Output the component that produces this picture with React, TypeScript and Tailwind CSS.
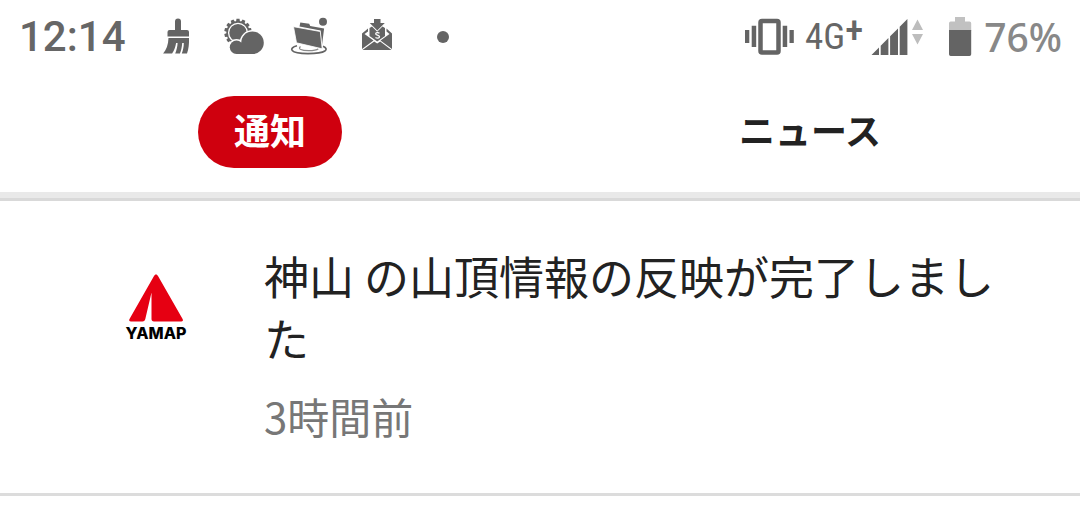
import React from "react";

const teeth = Array.from({ length: 14 }, (_, i) => (i * 360) / 14);

function BrushIcon() {
  return (
    <svg viewBox="164 18 28 38" className="h-[38px] w-7 fill-[#646464]" aria-hidden="true">
      <path d="M176 30V21.500a3 3 0 0 1 6 0V30h6a2 2 0 0 1 2 2v4.500h-21.500V32a2 2 0 0 1 2-2z" />
      <path d="M169.500 38H190c.2 6-.3 11-2 15.500h-5.200c1.300-3.500 2-7 2-10.500h-1.600c-.3 4-1 7.500-2.300 10.500h-4.700c1.400-3.500 2.200-7 2.400-10.500h-1.500c-.7 4-2 7.500-4 10.500h-9c3.200-3.500 5.200-9 5.400-15.500z" />
    </svg>
  );
}

function WeatherIcon() {
  return (
    <svg viewBox="224 17 42 38" className="h-[38px] w-[42px] fill-[#646464]" aria-hidden="true">
      <circle cx="239" cy="31.500" r="11.600" />
      {teeth.map((a) => (
        <path key={a} d="M237 21l.5-3.200h3L241 21z" transform={`rotate(${a} 239 31.500)`} />
      ))}
      <circle cx="239" cy="31.800" r="9.400" fill="none" stroke="#fff" strokeWidth="1.300" />
      <g stroke="#fff" strokeWidth="3">
        <circle cx="237.500" cy="46.300" r="6.700" />
        <circle cx="253.500" cy="41.700" r="11.300" />
      </g>
      <circle cx="237.500" cy="46.300" r="6.700" />
      <circle cx="253.500" cy="41.700" r="11.300" />
      <path d="M237.500 42h16v11h-16z" />
    </svg>
  );
}

function FolderIcon() {
  return (
    <svg viewBox="290 18 40 40" className="h-10 w-10 fill-[#646464]" aria-hidden="true">
      <path
        d="M298 46.800c-8.500 2.200-8 7.700 11 7.800 18.500-.1 21.500-4.300 15-7.300"
        fill="none"
        stroke="#646464"
        strokeWidth="1.700"
      />
      <path d="M301.500 47.500c-3 2.500 1 4.200 8 4.200 5 0 8.500-.7 9.800-1.900" fill="none" stroke="#8a8a8a" strokeWidth="1.200" />
      <path d="M300.500 27.500l.8-4 8.900 1.200 1 2.300 13.900 2.500-2.200 17.500-1.300-15.500z" />
      <path d="M294.500 27.700l26.800 4.800 1.900 17.300-25.700-6z" stroke="#fff" strokeWidth="0.800" />
      <circle cx="324" cy="22.700" r="4" />
    </svg>
  );
}

function MailIcon() {
  return (
    <svg viewBox="361 17 32 34" className="h-[34px] w-8 fill-[#646464]" aria-hidden="true">
      <path d="M374 18h6.500v4h4.300l-7.500 7.500-7.500-7.500h4.200z" />
      <path d="M369.500 27l2.500-1.500 5.200 5.300 5.300-5.300 2.500 1.500v8l-7.800 5.500-7.700-5.500z" />
      <path
        d="M379.500 32.200c-1.500-1-4-.5-3.800.8.200 1.500 3.800 1 3.800 2.800 0 1.400-2.400 1.700-4 .7"
        fill="none"
        stroke="#fff"
        strokeWidth="1.300"
      />
      <path d="M368 27.500l-6 5V48l11.500-8.600-9-6.400 3.500-2.500zM386.500 27.500l5.500 5V48l-11.500-8.600 9-6.400-3-2.500z" />
      <path d="M362.500 49l11.700-8.600 3 2 3-2L391.500 49z" />
    </svg>
  );
}

function VibrateIcon() {
  return (
    <svg viewBox="744 18 50 38" className="h-[38px] w-[50px] fill-[#646464]" aria-hidden="true">
      <rect x="759.500" y="21" width="18" height="31.500" rx="1.500" fill="none" stroke="#646464" strokeWidth="4.500" />
      <path d="M744 30h4.300v13H744zM750.700 25.700h4.500V47h-4.500zM781.700 25.700h4.500V47h-4.500zM788.500 30h4.300v13h-4.300z" />
    </svg>
  );
}

function SignalIcon() {
  return (
    <svg viewBox="869 18 54 37" className="h-[37px] w-[54px] fill-[#646464]" aria-hidden="true">
      <path d="M869.500 54l7.500-7.500V54zM878.700 44.700l7.700-7.700V54h-7.700zM888.100 35.300l7.900-7.900V54h-7.900zM897.700 25.700l7.700-7.700V54h-7.700z" />
      <path className="fill-[#bdbdbd]" d="M910 29l5.500-10.500L921 29zM910 33h11l-5.500 10.500z" />
    </svg>
  );
}

function BatteryIcon() {
  return (
    <svg viewBox="947 16 23 40" className="h-10 w-[23px]" aria-hidden="true">
      <path className="fill-[#c1c1c1]" d="M953 16h10v4.500h4.500a1.700 1.700 0 0 1 1.700 1.700V30H947v-7.800a1.700 1.700 0 0 1 1.700-1.700h4.300z" />
      <path className="fill-[#646464]" d="M947 29h22.200v24.300a1.700 1.700 0 0 1-1.700 1.700h-18.800a1.700 1.700 0 0 1-1.700-1.700z" />
    </svg>
  );
}

function StatusBar() {
  return (
    <div className="flex h-[74px] items-center justify-between pr-[18px] pl-[19px] text-[#666]">
      <div className="flex items-center">
        <span className="w-36 font-['Roboto',sans-serif] text-[42px] leading-[44px] font-medium">12:14</span>
        <BrushIcon />
        <span className="ml-8 flex items-center">
          <WeatherIcon />
        </span>
        <span className="ml-6 flex items-center">
          <FolderIcon />
        </span>
        <span className="ml-8 flex items-center pb-1">
          <MailIcon />
        </span>
        <span className="ml-11 size-3 rounded-full bg-[#646464]" />
      </div>
      <div className="flex items-center">
        <VibrateIcon />
        <span className="ml-2.5 flex font-['Roboto_Condensed','Liberation_Sans_Narrow',sans-serif] text-[37px] leading-[40px]">
          4G<span className="-mt-1.5 font-medium">+</span>
        </span>
        <span className="ml-2 flex items-center">
          <SignalIcon />
        </span>
        <span className="ml-6 flex items-center">
          <BatteryIcon />
        </span>
        <span className="ml-3 font-['Noto_Sans',sans-serif] text-[39px] leading-[44px] font-medium text-[#888]">76%</span>
      </div>
    </div>
  );
}

function Tabs() {
  return (
    <nav className="grid grid-cols-2 border-b-[6px] border-[#e9e9e9] pt-[22px] pb-6">
      {[
        { label: "通知", style: "bg-[#cf000e] text-white" },
        { label: "ニュース", style: "text-[#222]" },
      ].map((tab) => (
        <div key={tab.label} className="flex justify-center">
          <button
            type="button"
            className={`h-[72px] rounded-full px-9 pb-1.5 text-[36px] leading-[52px] font-bold whitespace-nowrap ${tab.style}`}
          >
            {tab.label}
          </button>
        </div>
      ))}
    </nav>
  );
}

function YamapLogo() {
  return (
    <svg viewBox="124 272 64 70" className="h-[70px] w-16" role="img" aria-label="YAMAP">
      <path
        className="fill-[#e60012]"
        d="M156 274.500c-.9 0-1.500.6-2 1.500L129.500 319c-.8 1.600-.2 2.400 1.500 2.400h11.500c1.700 0 2.400-.7 2.800-2.300l6.200-26.600V319c0 1.600.8 2.400 2.500 2.400h27.200c1.700 0 2.200-1 1.400-2.400L158 276c-.5-.9-1.100-1.500-2-1.500z"
      />
      <text
        x="156"
        y="339"
        textAnchor="middle"
        className="fill-black font-['Inter',sans-serif] text-[16px] font-extrabold"
      >
        YAMAP
      </text>
    </svg>
  );
}

function NotificationItem({ title, time }: { title: string; time: string }) {
  return (
    <li className="border-b-[3px] border-[#dcdcdc]">
      <a href="#notification" className="flex items-start pt-11 pr-12 pb-[46px] pl-[124px]">
        <span className="mt-[27px] mr-[76px] shrink-0">
          <YamapLogo />
        </span>
        <span className="flex min-w-0 flex-col gap-4">
          <span className="text-[45px] leading-[62px] text-[#222]">{title}</span>
          <span className="text-[42px] leading-[62px] text-[#777]">{time}</span>
        </span>
      </a>
    </li>
  );
}

export default function App() {
  return (
    <div className="min-h-screen bg-white font-['Noto_Sans_CJK_JP',sans-serif]">
      <StatusBar />
      <Tabs />
      <main>
        <ul className="border-t-[3px] border-[#d9d9d9]">
          <NotificationItem title="神山 の山頂情報の反映が完了しました" time="3時間前" />
        </ul>
      </main>
    </div>
  );
}
